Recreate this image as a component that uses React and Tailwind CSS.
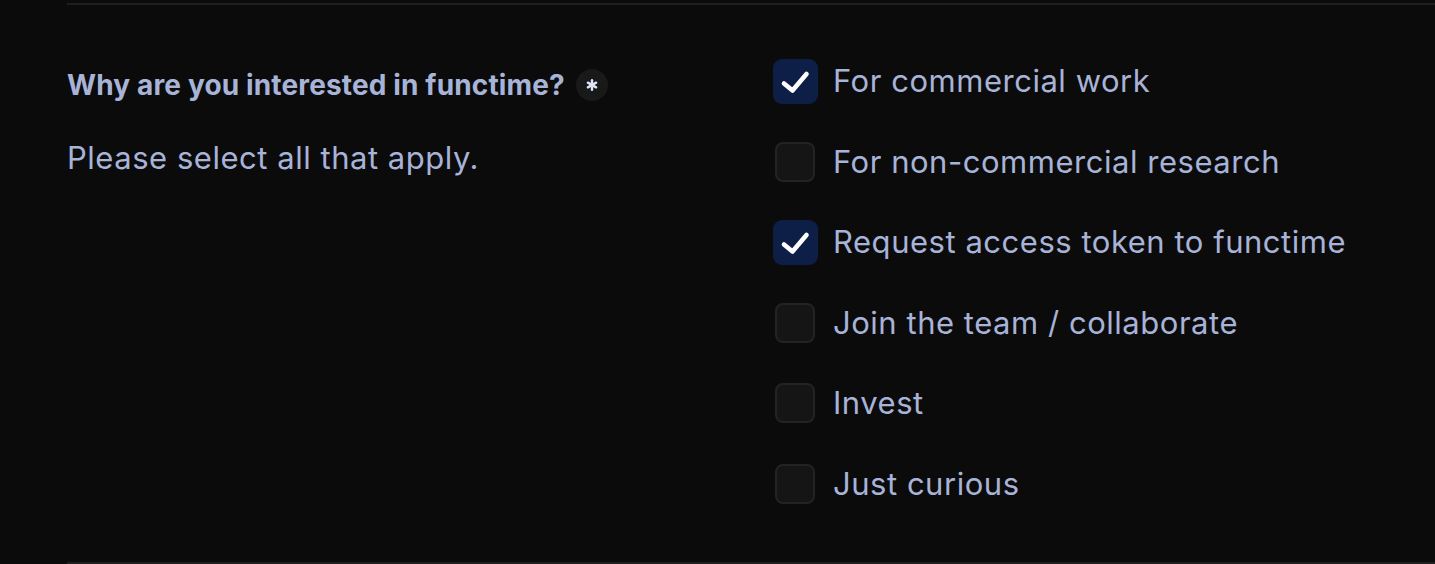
import React, { useState } from "react";

const OPTIONS = [
  { id: "commercial", label: "For commercial work" },
  { id: "research", label: "For non-commercial research" },
  { id: "token", label: "Request access token to functime" },
  { id: "team", label: "Join the team / collaborate" },
  { id: "invest", label: "Invest" },
  { id: "curious", label: "Just curious" },
];

function Checkbox({ checked, onChange }) {
  return (
    <span className="flex h-[44px] w-[44px] shrink-0 items-center justify-center">
      {checked ? (
        <span
          onClick={onChange}
          className="flex h-[45px] w-[45px] items-center justify-center rounded-[9px] bg-[#0e1f47]"
        >
          <svg width="45" height="45" viewBox="0 0 45 45" fill="none">
            <path
              d="M11 24.5 L19.5 31.5 L33.5 15"
              stroke="#ffffff"
              strokeWidth="4.6"
              strokeLinecap="round"
              strokeLinejoin="round"
            />
          </svg>
        </span>
      ) : (
        <span
          onClick={onChange}
          className="block h-[40px] w-[40px] rounded-[8px] border-2 border-[#222326] bg-[#151515]"
        />
      )}
    </span>
  );
}

export default function App() {
  const [selected, setSelected] = useState({ commercial: true, token: true });

  const toggle = (id) => setSelected((s) => ({ ...s, [id]: !s[id] }));

  return (
    <main
      className="h-[564px] w-full overflow-hidden bg-[#0b0b0b] pt-[3px] pl-[67px]"
      style={{ fontFamily: "Inter, 'Noto Sans', sans-serif" }}
    >
      <div className="flex h-[561px] border-y-2 border-[#1f1f1f] pt-[54px]">
        <div className="w-[706px] shrink-0 pt-[8px]">
          <div className="flex items-center gap-[11px]">
            <h2 className="text-[28px] leading-[36px] font-bold tracking-[0.005em] text-[#a8b3d8]">
              Why are you interested in functime?
            </h2>
            <span className="flex h-[32px] w-[32px] items-center justify-center rounded-full bg-[#191919]">
              <svg width="12" height="12" viewBox="0 0 14 14" fill="none">
                <g stroke="#dfe4f7" strokeWidth="2.8" strokeLinecap="round">
                  <path d="M7 1.5 V12.5" />
                  <path d="M2.2 4.25 L11.8 9.75" />
                  <path d="M2.2 9.75 L11.8 4.25" />
                </g>
              </svg>
            </span>
          </div>
          <p className="mt-[37px] text-[31px] leading-[36px] tracking-[0.017em] text-[#a8b3d8]">
            Please select all that apply.
          </p>
        </div>

        <ul className="flex flex-col gap-[36.6px]">
          {OPTIONS.map((o) => (
            <li
              key={o.id}
              className="flex h-[44px] cursor-pointer items-center gap-[16px]"
              onClick={() => toggle(o.id)}
            >
              <Checkbox checked={!!selected[o.id]} />
              <span className="whitespace-nowrap text-[31px] leading-[36px] tracking-[0.017em] text-[#a8b3d8]">
                {o.label}
              </span>
            </li>
          ))}
        </ul>
      </div>
    </main>
  );
}
